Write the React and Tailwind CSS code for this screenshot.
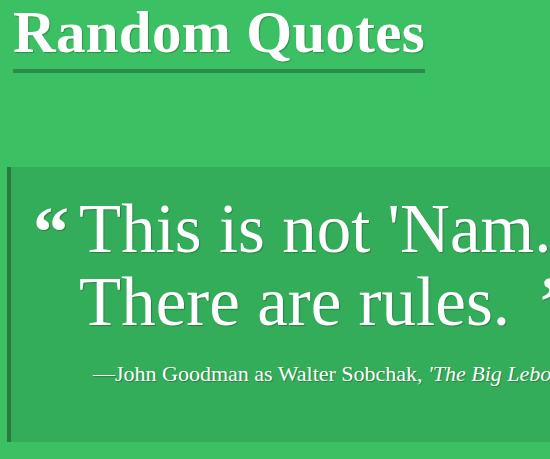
import React from "react";

const quote = {
  lines: ["This is not 'Nam.", "There are rules."],
  author: "John Goodman as Walter Sobchak",
  source: "'The Big Lebowski'",
};

export default function App() {
  return (
    <div className="h-[459px] w-[550px] overflow-hidden bg-[#3bc163] font-['Liberation_Serif',serif] text-white [text-shadow:1px_1px_1px_rgba(0,0,0,0.25)]">
      <header className="px-[13px]">
        <h1 className="inline-block border-b-4 border-[#2e8a48] pb-[4px] text-[59px] font-bold leading-[65px] tracking-[0.3px]">
          Random Quotes
        </h1>
      </header>

      <section className="ml-[7px] mt-[94px] h-[275px] w-[700px] border-l-4 border-[#2a7a40] bg-[#34ad5a] pl-[22px] pt-[26px]">
        <blockquote className="flex items-start whitespace-nowrap">
          <span className="mt-[9px] w-[46px] shrink-0 text-[72px] font-bold leading-[60px]">“</span>
          <div className="text-[69px] leading-[73px]">
            <div>{quote.lines[0]}</div>
            <div>
              {quote.lines[1]}
              <span className="ml-[30px] font-bold">”</span>
            </div>
          </div>
        </blockquote>
        <p className="ml-[60px] mt-[18px] whitespace-nowrap text-[22px]">
          —{quote.author}, <i>{quote.source}</i>
        </p>
      </section>
    </div>
  );
}
